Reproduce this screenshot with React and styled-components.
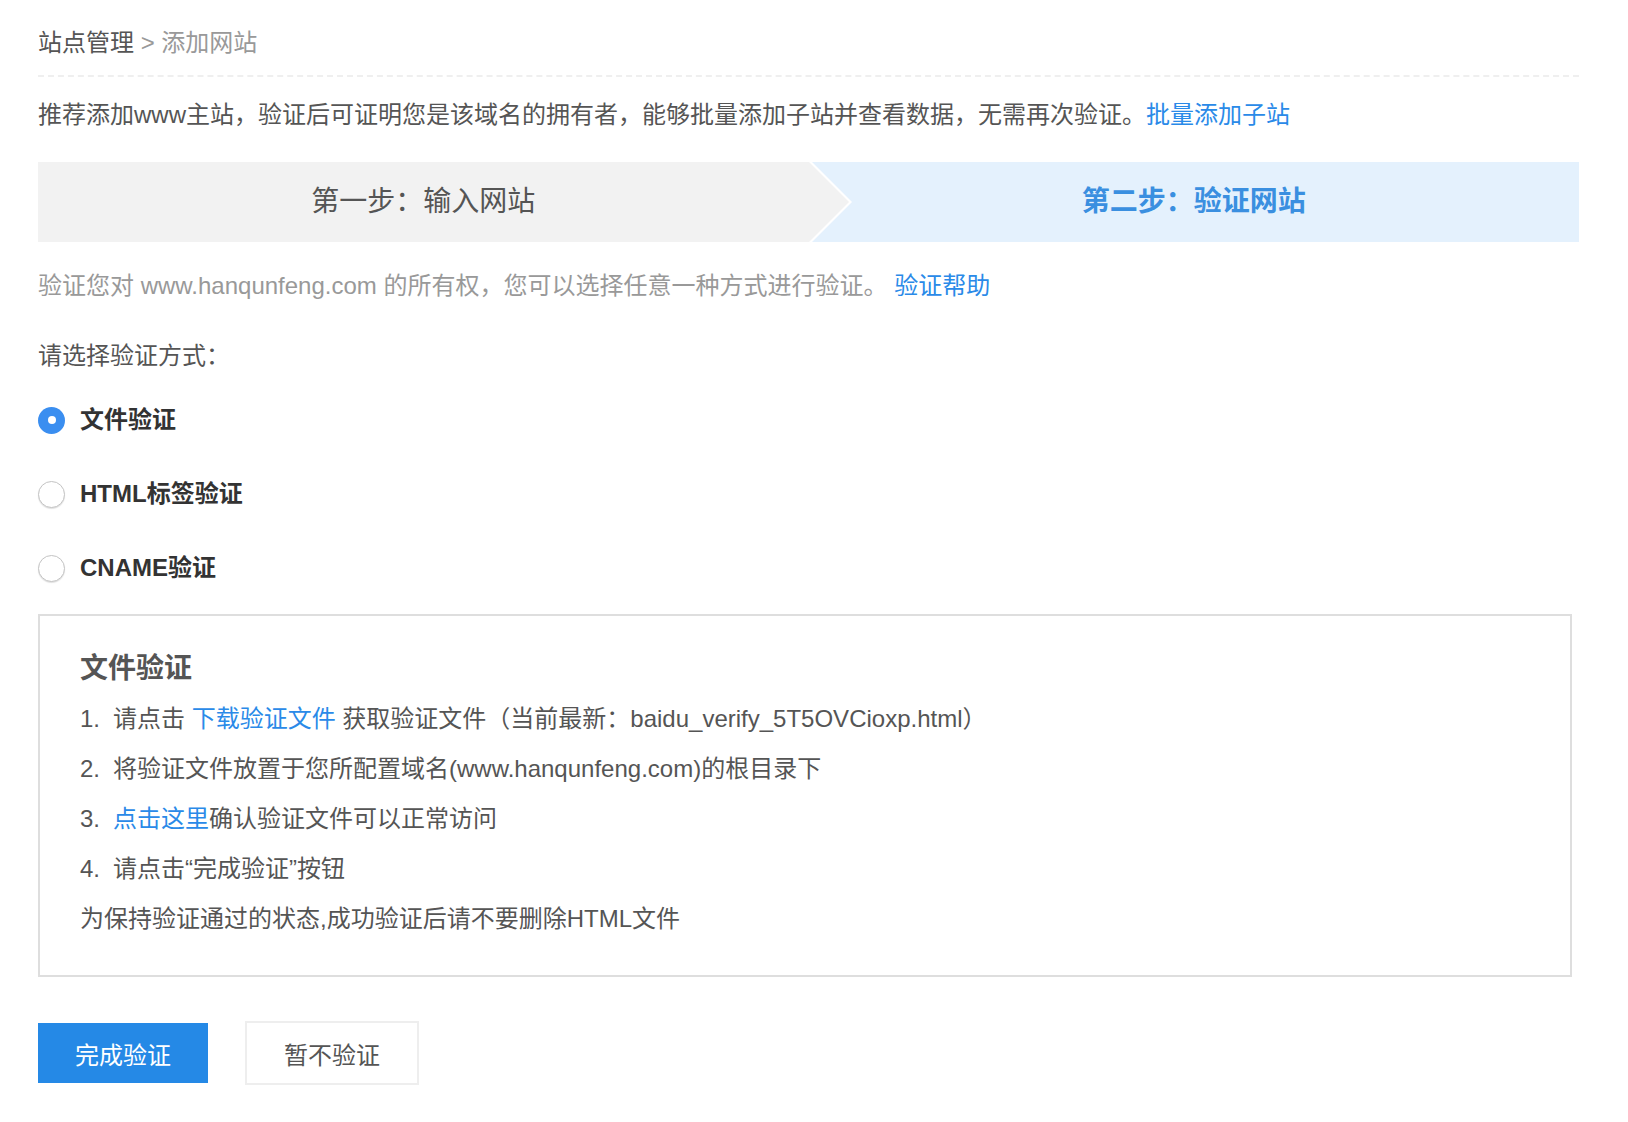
import React from 'react'
import styled, { createGlobalStyle } from 'styled-components'

const GlobalStyle = createGlobalStyle`
  body {
    margin: 0;
    background: #fff;
    font-family: "Liberation Sans", "Noto Sans CJK SC", sans-serif;
    color: #555;
  }
`

const Page = styled.div`
  padding: 28px 49px 30px 38px;
  font-size: 24px;
  line-height: 30px;
`

const Crumbs = styled.div`
  color: #555;
  padding-bottom: 17px;
  border-bottom: 2px dashed #efefef;
  span { color: #999; }
`

const Intro = styled.p`
  margin: 23px 0 0;
  color: #555;
`

const Link = styled.a`
  color: #2a8ae8;
  text-decoration: none;
  cursor: pointer;
`

const Steps = styled.div`
  display: flex;
  height: 80px;
  margin-top: 32px;
`

const Step = styled.div`
  position: relative;
  flex: 1;
  display: flex;
  align-items: center;
  justify-content: center;
  font-size: 28px;
  background: ${p => (p.active ? '#e4f1fd' : '#f2f2f2')};
  color: ${p => (p.active ? '#3a8fe0' : '#555')};
  font-weight: ${p => (p.active ? 'bold' : 'normal')};
  z-index: ${p => (p.active ? 0 : 1)};

  ${p => !p.active && `
    &::before, &::after {
      content: "";
      position: absolute;
      left: 100%;
      width: 0;
      height: 0;
    }
    &::before {
      top: -3px;
      border-left: 43px solid #fff;
      border-top: 43px solid transparent;
      border-bottom: 43px solid transparent;
    }
    &::after {
      top: 0;
      border-left: 40px solid #f2f2f2;
      border-top: 40px solid transparent;
      border-bottom: 40px solid transparent;
    }
  `}
`

const Note = styled.p`
  margin: 29px 0 0;
  color: #999;
`

const Prompt = styled.p`
  margin: 40px 0 0;
  color: #555;
`

const Options = styled.div`
  margin-top: 12px;
`

const Option = styled.label`
  display: flex;
  align-items: center;
  gap: 15px;
  height: 74px;
  font-weight: bold;
  color: #333;
  cursor: pointer;
`

const Radio = styled.span`
  position: relative;
  width: 27px;
  height: 27px;
  box-sizing: border-box;
  border-radius: 50%;
  flex: none;
  background: ${p => (p.checked ? '#3a8ef0' : '#fff')};
  border: ${p => (p.checked ? 'none' : '1px solid #c4c4c4')};
  box-shadow: ${p => (p.checked ? 'none' : '0 1px 1px rgba(0,0,0,0.12)')};

  ${p => p.checked && `
    &::after {
      content: "";
      position: absolute;
      left: 50%;
      top: 50%;
      width: 8px;
      height: 8px;
      margin: -4px 0 0 -4px;
      border-radius: 50%;
      background: #fff;
    }
  `}
`

const Panel = styled.div`
  margin: 9px 7px 0 0;
  border: 2px solid #dedede;
  padding: 36px 40px 31px;
`

const PanelTitle = styled.h3`
  margin: 0 0 8px;
  font-size: 28px;
  line-height: 34px;
  font-weight: bold;
  color: #555;
`

const Line = styled.div`
  line-height: 50px;
  color: #555;
`

const Num = styled.span`
  display: inline-block;
  width: 33px;
`

const Actions = styled.div`
  display: flex;
  align-items: center;
  gap: 37px;
  margin-top: 44px;
`

const Button = styled.button`
  font-family: inherit;
  font-size: 24px;
  box-sizing: border-box;
  cursor: pointer;
  width: ${p => (p.primary ? '170px' : '174px')};
  height: ${p => (p.primary ? '60px' : '64px')};
  background: ${p => (p.primary ? '#2589e6' : '#fff')};
  color: ${p => (p.primary ? '#fff' : '#555')};
  border: ${p => (p.primary ? 'none' : '2px solid #eeeeee')};
  border-radius: 0;
`

const methods = ['文件验证', 'HTML标签验证', 'CNAME验证']

export default function App() {
  return (
    <>
      <GlobalStyle />
      <Page>
        <Crumbs>站点管理<span> &gt; 添加网站</span></Crumbs>
        <Intro>
          推荐添加www主站，验证后可证明您是该域名的拥有者，能够批量添加子站并查看数据，无需再次验证。<Link>批量添加子站</Link>
        </Intro>

        <Steps>
          <Step>第一步：输入网站</Step>
          <Step active>第二步：验证网站</Step>
        </Steps>

        <Note>
          验证您对 www.hanqunfeng.com 的所有权，您可以选择任意一种方式进行验证。 <Link>验证帮助</Link>
        </Note>

        <Prompt>请选择验证方式：</Prompt>
        <Options>
          {methods.map((m, i) => (
            <Option key={m}>
              <Radio checked={i === 0} />
              {m}
            </Option>
          ))}
        </Options>

        <Panel>
          <PanelTitle>文件验证</PanelTitle>
          <Line><Num>1.</Num>请点击 <Link>下载验证文件</Link> 获取验证文件（当前最新：baidu_verify_5T5OVCioxp.html）</Line>
          <Line><Num>2.</Num>将验证文件放置于您所配置域名(www.hanqunfeng.com)的根目录下</Line>
          <Line><Num>3.</Num><Link>点击这里</Link>确认验证文件可以正常访问</Line>
          <Line><Num>4.</Num>请点击“完成验证”按钮</Line>
          <Line>为保持验证通过的状态,成功验证后请不要删除HTML文件</Line>
        </Panel>

        <Actions>
          <Button primary>完成验证</Button>
          <Button>暂不验证</Button>
        </Actions>
      </Page>
    </>
  )
}
